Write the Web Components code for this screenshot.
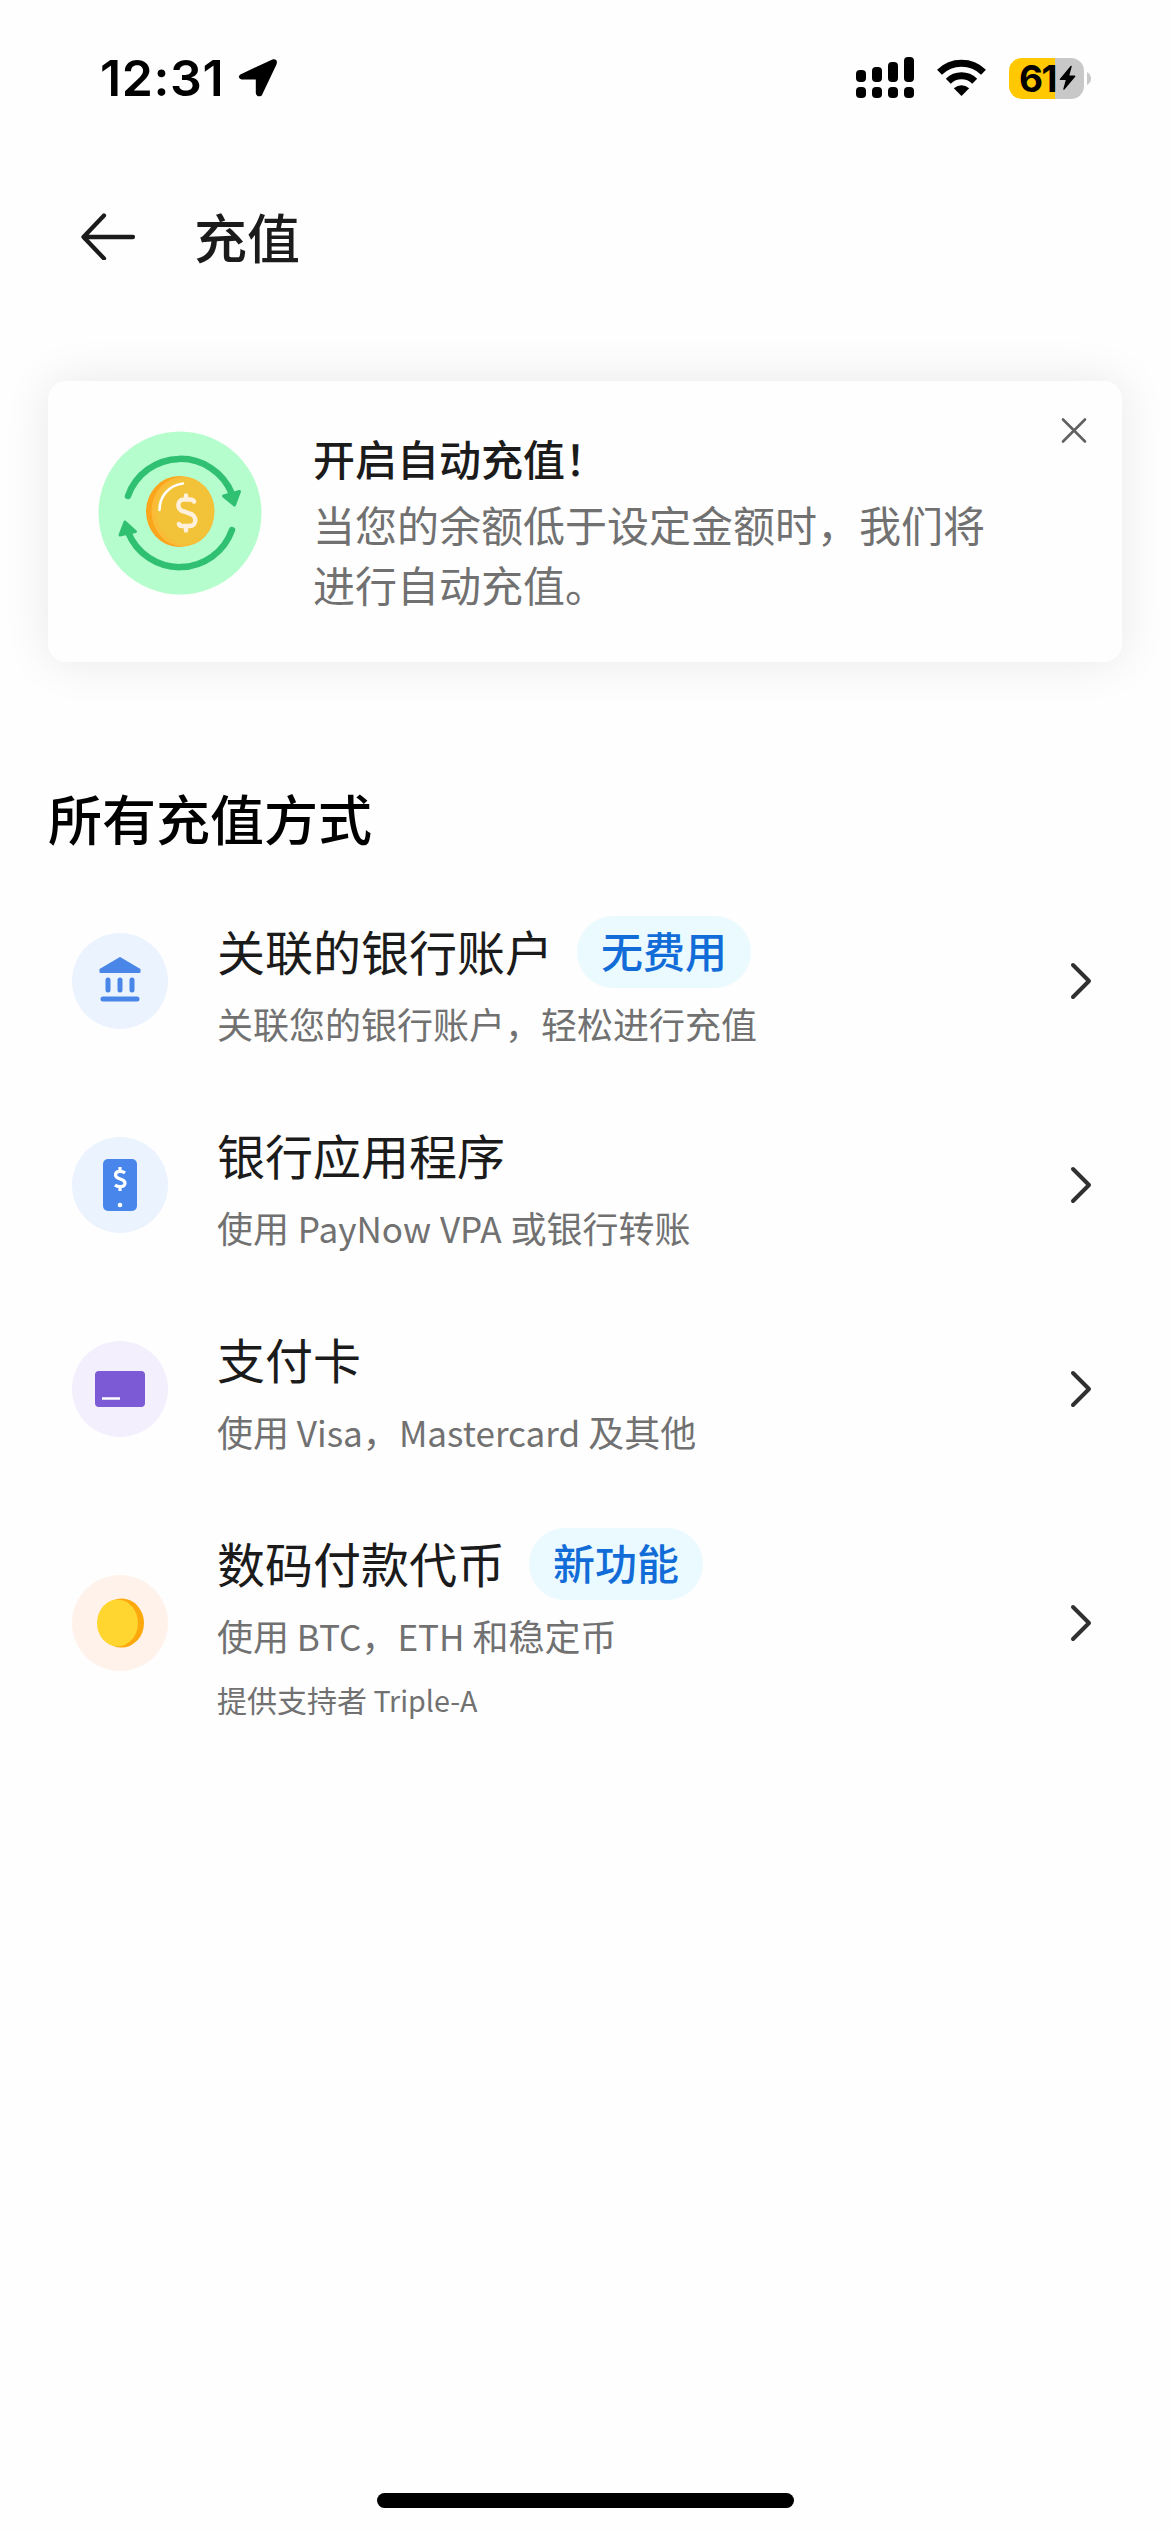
<!DOCTYPE html>
<html lang="zh-CN">
<head>
<meta charset="utf-8">
<title>充值</title>
<style>
html,body{margin:0;background:#fefefe}
body{width:1170px;height:2532px;overflow:hidden;font-family:"Noto Sans CJK SC",sans-serif;color:#1b1b1b}
</style>
</head>
<body>
<topup-page></topup-page>
<script>
const define=(name,html)=>customElements.define(name,class extends HTMLElement{
  constructor(){super();const t=document.createElement('template');t.innerHTML=html;
    this.attachShadow({mode:'open'}).appendChild(t.content.cloneNode(true));}
});

define('status-bar',`<style>
:host{display:flex;align-items:center;height:156px;box-sizing:border-box;padding:0 79px 0 100px;font-family:Inter,sans-serif;color:#000}
.time{font-size:50px;font-weight:600;line-height:60px;letter-spacing:.6px}
.loc{margin-left:14px}
.right{margin-left:auto;display:flex;align-items:center}
svg{display:block}
.bat{display:flex;align-items:center;justify-content:center;width:75px;height:41px;border-radius:13px;background:linear-gradient(90deg,#ffc800 46px,#c8c8c8 46px);box-sizing:border-box;padding:0 8px 0 10px;gap:3px}
.bat b{font-size:37px;line-height:41px;font-weight:700;letter-spacing:-1.5px}
</style>
<span class="time">12:31</span>
<svg class="loc" width="40" height="42" viewBox="0 0 40 42"><path d="M3.5 18.5 34.5 4Q38.5 3 37 7L22.5 37.5Q19.5 38.5 19.3 36V21H4Q1 20 3.5 18.5Z" fill="#000" stroke="#000" stroke-width="3" stroke-linejoin="round"/></svg>
<div class="right">
<svg width="58" height="42" viewBox="0 0 58 42"><rect y="13" width="10" height="12" rx="4"/><rect x="16" y="10" width="10" height="15" rx="4"/><rect x="32" y="5" width="10" height="20" rx="4"/><rect x="48" y="0" width="10" height="25" rx="4"/><rect y="30" width="10" height="11" rx="4"/><rect x="16" y="30" width="10" height="11" rx="4"/><rect x="32" y="30" width="10" height="11" rx="4"/><rect x="48" y="30" width="10" height="11" rx="4"/></svg>
<svg style="margin-left:22px" width="51" height="38" viewBox="0 0 51 38"><path d="M3.500 13.200A31.500 31.500 0 0 1 47.500 13.200M12.300 22.200A18.800 18.800 0 0 1 38.700 22.200" fill="none" stroke="#000" stroke-width="7"/><path d="M17.800 29.200Q25.500 23.200 33.200 29.200L25.500 37Z"/></svg>
<div class="bat" style="margin-left:22px"><b>61</b><svg width="19" height="28" viewBox="0 0 19 28"><path d="M13.500 1 1.500 15.500H8.500L5.500 26.500 17.500 12H10.500Z" stroke="#000" stroke-width="1.500" stroke-linejoin="round"/></svg></div>
<svg style="margin-left:3px" width="4" height="13" viewBox="0 0 4 13"><path d="M0 0Q4 2.500 4 6.500T0 13Z" fill="#c8c8c8"/></svg>
</div>`);

define('nav-header',`<style>
:host{display:flex;align-items:center;height:160px;padding-left:80px;gap:58px}
svg{display:block}
h1{margin:0;font-size:53px;line-height:78px;font-weight:500}
</style>
<svg width="56" height="48" viewBox="0 0 56 48"><path d="M24 3.500 3.500 25 24 46.500M3.500 25H53" fill="none" stroke="#1b1b1b" stroke-width="4.300" stroke-linecap="round" stroke-linejoin="round"/></svg>
<h1><slot></slot></h1>`);

define('promo-card',`<style>
:host{display:flex;margin:65px 48px 0;height:281px;box-sizing:border-box;padding:47px 34px 0 50px;border-radius:18px;background:#fefefe;box-shadow:0 0 48px rgba(0,0,0,.09)}
.pic{margin-top:3px;flex:none}
.txt{margin-left:51px;width:690px}
h2{margin:0;font-size:42px;line-height:60px;font-weight:500}
p{margin:6px 0 0;font-size:42px;line-height:60px;color:#717171}
.x{margin:-11px 0 0 auto;flex:none}
svg{display:block}
</style>
<svg class="pic" width="164" height="164" viewBox="0 0 164 164"><circle cx="82" cy="82" r="81.500" fill="#b6fdcd"/>
<g fill="none" stroke="#30c072" stroke-width="6.500" stroke-linecap="round"><path d="M30 65A55.500 55.500 0 0 1 134 63"/><path d="M134 99A55.500 55.500 0 0 1 30 101"/></g>
<g fill="#30c072" stroke="#30c072" stroke-width="3" stroke-linejoin="round"><path d="M125.500 65 141.500 60.500 136.500 74Z"/><path d="M22 104 27 91 37.500 100.500Z"/></g>
<ellipse cx="81" cy="80.500" rx="33" ry="35.500" fill="#faa51c"/><ellipse cx="85" cy="80.500" rx="31.500" ry="35" fill="#fabb36"/><ellipse cx="87" cy="80.500" rx="29" ry="33" fill="#f2c238"/>
<path d="M61.500 79C61.500 66 70 54.500 85 52.500" fill="none" stroke="#fff" stroke-width="2.500" stroke-linecap="round"/>
<path d="M96 70.500C95.500 69 94 68.500 92 68.500H86C78.500 68.500 78.500 79 86 80.500L91.500 82.500C99.500 84.500 99 95 91.500 95H84C82 95 81.500 94.500 81 93M88 64.500V68M88 96V99.500" fill="none" stroke="#fff0dc" stroke-width="4.500" stroke-linecap="round"/></svg>
<div class="txt"><h2><slot name="title"></slot></h2><p><slot></slot></p></div>
<svg class="x" width="28" height="28" viewBox="0 0 28 28"><path d="M3 3 25 25M25 3 3 25" transform="translate(0 -.5)" fill="none" stroke="#616161" stroke-width="2.600" stroke-linecap="round"/></svg>`);

define('section-title',`<style>:host{display:block;margin:117px 48px 0;font-size:54px;line-height:78px;font-weight:500;color:#000}</style><slot></slot>`);

define('fee-badge',`<style>:host{display:block;box-sizing:border-box;height:72px;margin:2px 0 0 1px;padding:0 24px;border-radius:36px;background:#eafaff;color:#126cd8;font-size:42px;line-height:68px;font-weight:500}</style><slot></slot>`);

define('method-row',`<style>
:host{display:flex;align-items:center;padding:36px 77px 36px 72px}
.ico{flex:none;width:96px;height:96px;border-radius:50%;background:var(--tint);display:flex}
.t{margin-left:49px;flex:1;min-width:0}
.h{display:flex;align-items:center;gap:23px;height:72px;font-size:48px;line-height:70px}
.h b{font-weight:400;padding-bottom:2px}
.s{margin-top:12px;height:48px;font-size:36px;line-height:48px;color:#717171}
::slotted([slot=note]){display:block;height:38px;margin-top:21px;font-size:30px;line-height:38px;color:#717171}
svg{display:block;flex:none}
</style>
<div class="ico"><slot name="icon"></slot></div>
<div class="t"><div class="h"><b><slot name="title"></slot></b><slot name="badge"></slot></div><div class="s"><slot></slot></div><slot name="note"></slot></div>
<svg width="24" height="40" viewBox="0 0 24 40"><path d="M4 4 20 20 4 36" fill="none" stroke="#303030" stroke-width="4" stroke-linecap="round" stroke-linejoin="round"/></svg>`);

const icon=(name,body)=>define(name,`<style>:host,svg{display:block;width:96px;height:96px}</style><svg viewBox="0 0 96 96">${body}</svg>`);
icon('icon-bank','<path d="M28.500 36.500 48 25 67.500 36.500V39H28.500Z" fill="#4986e7" stroke="#4986e7" stroke-width="2" stroke-linejoin="round"/><path d="M36 47V57M48 47V57M60 47V57M31 66H65" stroke="#4986e7" stroke-width="5" stroke-linecap="round"/>');
icon('icon-phone','<rect x="31" y="22" width="34" height="52" rx="5" fill="#4986ec"/><path d="M53 36C50 33.500 43.500 33.500 43.500 38C43.500 43 53 41 53 46C53 50.500 46 50.500 43 48M48 30V34M48 50V54" fill="none" stroke="#fff" stroke-width="3.200"/><circle cx="48" cy="68" r="2.300" fill="#fff"/>');
icon('icon-card','<rect x="23" y="30" width="50" height="36" rx="4" fill="#7c5ad6"/><path d="M30 57.500H48" stroke="#fff" stroke-width="2.500"/>');
icon('icon-coin','<ellipse cx="49.500" cy="48" rx="22.500" ry="24.500" fill="#fda80c"/><ellipse cx="45.500" cy="48" rx="20.500" ry="23.500" fill="#ffd52f"/>');

define('home-indicator',`<style>:host{display:block;width:417px;height:15px;border-radius:8px;background:#000;margin:auto auto 24px}</style>`);

define('topup-page',`<style>:host{display:flex;flex-direction:column;width:1170px;height:2532px}.list{margin-top:22px}.lat{font-size:.975em;line-height:0}.wide{word-spacing:1px}.small{font-size:.955em}</style>
<status-bar></status-bar>
<nav-header>充值</nav-header>
<promo-card><span slot="title">开启自动充值！</span>当您的余额低于设定金额时，我们将进行自动充值。</promo-card>
<section-title>所有充值方式</section-title>
<div class="list">
<method-row style="--tint:#ebf3fe"><icon-bank slot="icon"></icon-bank><span slot="title">关联的银行账户</span><fee-badge slot="badge">无费用</fee-badge>关联您的银行账户，轻松进行充值</method-row>
<method-row style="--tint:#ebf3fe"><icon-phone slot="icon"></icon-phone><span slot="title">银行应用程序</span>使用<span class="lat wide"> PayNow VPA </span>或银行转账</method-row>
<method-row style="--tint:#f3effc"><icon-card slot="icon"></icon-card><span slot="title">支付卡</span>使用<span class="lat"> Visa</span>，<span class="lat">Mastercard </span>及其他</method-row>
<method-row style="--tint:#fff2ea"><icon-coin slot="icon"></icon-coin><span slot="title">数码付款代币</span><fee-badge slot="badge">新功能</fee-badge>使用<span class="lat"> BTC</span>，<span class="lat">ETH </span>和稳定币<span slot="note">提供支持者<span class="lat small"> Triple-A</span></span></method-row>
</div>
<home-indicator></home-indicator>`);
</script>
</body>
</html>
